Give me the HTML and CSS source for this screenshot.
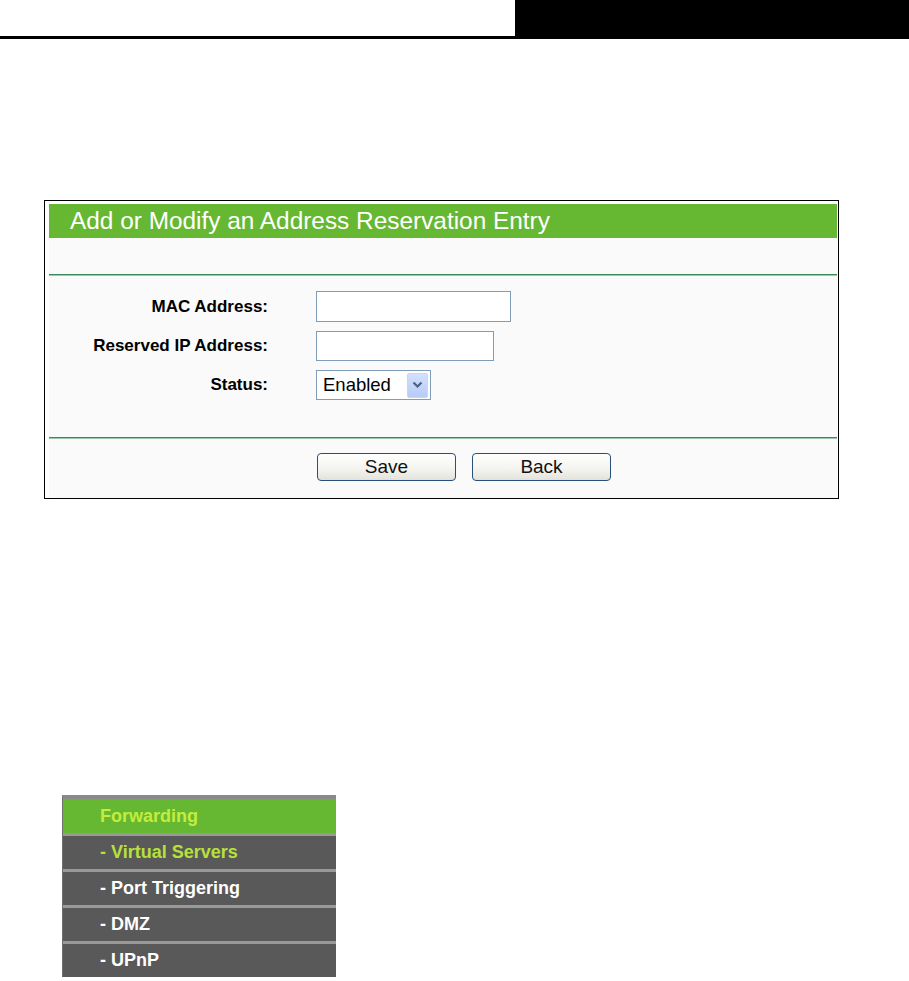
FILE: index.html
```html
<!DOCTYPE html>
<html lang="en">
<head>
  <meta charset="UTF-8">
  <title>Address Reservation</title>
  <link rel="stylesheet" href="styles.css">
</head>
<body>
  <div class="page-head">
    <div class="head-rule"></div>
    <div class="head-box"></div>
  </div>

  <!-- Add / modify entry panel -->
  <div class="panel">
    <div class="panel-inner">
      <div class="panel-title">Add or Modify an Address Reservation Entry</div>
      <div class="panel-blank"></div>
      <div class="green-line"></div>
      <div class="form-grid">
        <label class="field-label">MAC Address:</label>
        <div><input class="text-input mac" type="text"></div>
        <label class="field-label">Reserved IP Address:</label>
        <div><input class="text-input ip" type="text"></div>
        <label class="field-label">Status:</label>
        <div class="fake-select">
          <span class="select-value">Enabled</span>
          <span class="select-arrow">
            <svg width="11" height="8" viewBox="0 0 11 8"><path d="M1.5 1.5 L5.5 5.5 L9.5 1.5" fill="none" stroke="#4d6185" stroke-width="2.2"/></svg>
          </span>
        </div>
      </div>
      <div class="green-line"></div>
      <div class="button-row">
        <button class="xp-button">Save</button>
        <button class="xp-button">Back</button>
      </div>
    </div>
  </div>

  <!-- Side menu -->
  <div class="menu">
    <div class="menu-item menu-head">Forwarding</div>
    <div class="menu-item current">- Virtual Servers</div>
    <div class="menu-item">- Port Triggering</div>
    <div class="menu-item">- DMZ</div>
    <div class="menu-item">- UPnP</div>
  </div>
</body>
</html>
```

FILE: styles.css
```css
body {
  margin: 0;
  padding: 0;
  background: #fff;
  font-family: 'Liberation Sans', Arial, sans-serif;
}
.page-head {
  display: flex;
  height: 39px;
}
.head-rule {
  width: 515px;
  border-bottom: 3px solid #000;
  box-sizing: border-box;
}
.head-box {
  flex: 1;
  background: #000;
}
.panel {
  margin: 161px 0 0 44px;
  width: 795px;
  height: 299px;
  box-sizing: border-box;
  border: 1px solid #000;
  padding: 3px 1px 0 4px;
  background: #fff;
}
.panel-inner {
  background: #fafafa;
  height: 100%;
}
.panel-title {
  height: 34px;
  line-height: 34px;
  background: #66b832;
  color: #fff;
  font-size: 24.4px;
  padding-left: 21px;
}
.panel-blank {
  height: 36px;
}
.green-line {
  height: 1px;
  background: #3c8a5c;
  border-bottom: 1px solid #9cc9ad;
}
.form-grid {
  display: grid;
  grid-template-columns: 219px auto;
  column-gap: 48px;
  row-gap: 9px;
  align-items: center;
  padding: 15px 0 37px 0;
}
.field-label {
  text-align: right;
  font-weight: bold;
  font-size: 17px;
  color: #000;
}
.text-input {
  display: block;
  height: 31px;
  box-sizing: border-box;
  border: 1px solid #7f9db9;
  background: #fff;
  margin: 0;
}
.text-input.mac {
  width: 195px;
}
.text-input.ip {
  width: 178px;
  height: 30px;
}
.fake-select {
  width: 115px;
  height: 30px;
  box-sizing: border-box;
  border: 1px solid #7f9db9;
  background: #fff;
  display: flex;
  align-items: center;
  justify-content: space-between;
  padding: 0 2px 0 6px;
}
.select-value {
  font-size: 18.5px;
  color: #000;
}
.select-arrow {
  width: 21px;
  height: 25px;
  box-sizing: border-box;
  background: linear-gradient(#d3e0fd, #b7cbf7);
  border: 1px solid #c8d6f4;
  border-radius: 2px;
  display: flex;
  align-items: center;
  justify-content: center;
}
.button-row {
  display: flex;
  gap: 16px;
  padding: 14px 0 0 268px;
}
.xp-button {
  width: 139px;
  height: 28px;
  border: 1px solid #28507a;
  border-radius: 4px;
  background: linear-gradient(#ffffff, #f3f3ee 60%, #e3e2da);
  font-family: 'Liberation Sans', Arial, sans-serif;
  font-size: 19px;
  color: #111;
  padding: 0;
}
.menu {
  margin: 296px 0 0 62px;
  width: 273px;
  border-top: 4px solid #8a8a8a;
  border-left: 1px solid #6e6e6e;
  background: #595959;
}
.menu-item {
  height: 33px;
  line-height: 33px;
  border-top: 3px solid #999;
  padding-left: 37px;
  color: #fff;
  font-weight: bold;
  font-size: 18px;
}
.menu-item.menu-head {
  height: 34px;
  line-height: 34px;
  border-top: none;
  background: #66b832;
  color: #c4ec3c;
}
.menu-item.current {
  color: #b7e03a;
}
```
